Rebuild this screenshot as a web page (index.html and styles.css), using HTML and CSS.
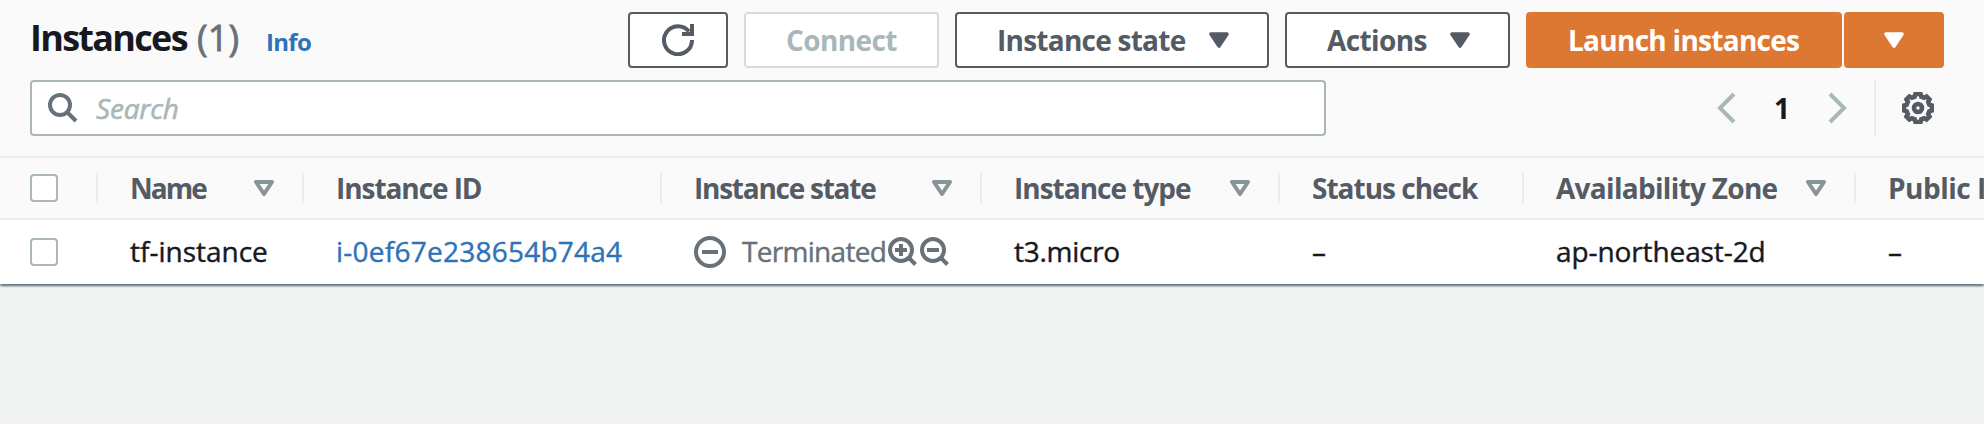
FILE: index.html
```html
<!DOCTYPE html>
<html lang="en">
<head>
<meta charset="utf-8">
<title>Instances</title>
<link rel="stylesheet" href="styles.css">
</head>
<body>
<svg class="defs" aria-hidden="true">
  <symbol id="caret" viewBox="0 0 20 16"><path d="M2 2h16l-8 12z" fill="currentColor" stroke="currentColor" stroke-width="3.6" stroke-linejoin="round"/></symbol>
  <symbol id="sort" viewBox="0 0 20 16"><path d="M2 2h16l-8 12z" fill="none" stroke="currentColor" stroke-width="4" stroke-linejoin="round"/></symbol>
</svg>
<main class="panel">
  <header class="toolbar">
    <h1 class="title"><span class="name">Instances</span><span class="count">(1)</span></h1>
    <a class="info">Info</a>
    <div class="actions">
      <button class="btn refresh" aria-label="Refresh"><svg width="32" height="32" viewBox="0 0 32 32" fill="none" stroke="currentColor" stroke-width="4"><path d="M30 16A14 14 0 1 1 27 7.5"/><path d="M20 10h10V0"/></svg></button>
      <button class="btn connect" disabled><span>Connect</span></button>
      <button class="btn state"><span>Instance state</span><svg class="caret"><use href="#caret"/></svg></button>
      <button class="btn act"><span>Actions</span><svg class="caret"><use href="#caret"/></svg></button>
      <div class="split">
        <button class="btn primary launch"><span>Launch instances</span></button>
        <button class="btn primary more" aria-label="More"><svg class="caret"><use href="#caret"/></svg></button>
      </div>
    </div>
  </header>
  <div class="filter">
    <div class="search">
      <svg width="30" height="30" viewBox="0 0 30 30" fill="none" stroke="currentColor" stroke-width="4"><circle cx="12" cy="12" r="10"/><path d="M19 19l9 9"/></svg>
      <span class="placeholder">Search</span>
    </div>
    <nav class="pages">
      <svg width="19" height="32" viewBox="0 0 19 32" fill="none" stroke="currentColor" stroke-width="4"><path d="M17 2L3 16l14 14"/></svg>
      <span class="page">1</span>
      <svg width="19" height="32" viewBox="0 0 19 32" fill="none" stroke="currentColor" stroke-width="4"><path d="M2 2l14 14L2 30"/></svg>
    </nav>
    <div class="settings">
      <svg width="32" height="32" viewBox="0 0 32 32" fill="none" stroke="currentColor" stroke-width="4.6"><path stroke-linejoin="miter" d="M13.500 2h5l.8 2.700 2.800 1.100 2.500-1.300 2.900 2.900-1.300 2.500 1.100 2.800 2.700.8v5l-2.700.8-1.100 2.800 1.300 2.500-2.900 2.900-2.500-1.300-2.800 1.100-.8 2.700h-5l-.8-2.700-2.800-1.100-2.500 1.300-2.900-2.900 1.300-2.500-1.100-2.800L2 18.500v-5l2.700-.8 1.100-2.800-1.300-2.500 2.900-2.900 2.500 1.300 2.800-1.100z"/><circle cx="16" cy="16" r="4"/></svg>
    </div>
  </div>
  <div class="row head">
    <div class="cell pick"><i class="box"></i></div>
    <div class="cell"><span class="col-name">Name</span><svg class="sort"><use href="#sort"/></svg></div>
    <div class="cell"><span class="col-id">Instance ID</span></div>
    <div class="cell"><span class="col-state">Instance state</span><svg class="sort"><use href="#sort"/></svg></div>
    <div class="cell"><span class="col-type">Instance type</span><svg class="sort"><use href="#sort"/></svg></div>
    <div class="cell"><span class="col-check">Status check</span></div>
    <div class="cell"><span class="col-zone">Availability Zone</span><svg class="sort"><use href="#sort"/></svg></div>
    <div class="cell"><span class="col-public">Public I</span></div>
  </div>
  <div class="row body">
    <div class="cell pick"><i class="box"></i></div>
    <div class="cell"><span>tf-instance</span></div>
    <div class="cell"><a class="val-id">i-0ef67e238654b74a4</a></div>
    <div class="cell status">
      <svg width="32" height="32" viewBox="0 0 32 32" fill="none" stroke="currentColor" stroke-width="4"><circle cx="16" cy="16" r="14"/><path d="M8 16h16"/></svg>
      <span class="val-state">Terminated</span>
      <svg class="zoom" width="30" height="30" viewBox="0 0 30 30" fill="none" stroke="currentColor" stroke-width="4"><circle cx="13" cy="13" r="11"/><path d="M20.500 20.500l7 7M7 13h12M13 7v12"/></svg>
      <svg class="zoom" width="30" height="30" viewBox="0 0 30 30" fill="none" stroke="currentColor" stroke-width="4"><circle cx="13" cy="13" r="11"/><path d="M20.500 20.500l7 7M7 13h12"/></svg>
    </div>
    <div class="cell"><span class="val-type">t3.micro</span></div>
    <div class="cell"><span>–</span></div>
    <div class="cell"><span class="val-zone">ap-northeast-2d</span></div>
    <div class="cell"><span>–</span></div>
  </div>
</main>
</body>
</html>
```
FILE: styles.css
```css
* { box-sizing: border-box; }
body { margin: 0; height: 424px; overflow: hidden; background: #f2f3f3; color: #16191f; font: 28px/40px "Open Sans", "Noto Sans", sans-serif; white-space: nowrap; }
svg { display: block; flex: none; }
.defs { display: none; }
.panel { height: 284px; background: #fafafa; box-shadow: 0 2px 2px rgba(0, 28, 36, .35), 2px 2px 2px rgba(0, 28, 36, .2), -2px 2px 2px rgba(0, 28, 36, .2); }
.toolbar { display: flex; height: 80px; padding: 12px 40px 0 30px; }
.title { display: flex; gap: 10px; margin: 0; width: 236px; font-size: 36px; line-height: 52px; }
.title .name { letter-spacing: -1.7px; }
.count { font-weight: 400; color: #687078; letter-spacing: .2px; -webkit-text-stroke: .8px; }
.info { font-size: 24px; font-weight: 700; line-height: 60px; color: #2e73b8; letter-spacing: -.7px; }
.actions { display: flex; gap: 16px; margin-left: auto; }
.btn { display: flex; align-items: center; height: 56px; padding: 0 0 0 40px; border: 2px solid #545b64; border-radius: 4px; background: #fff; color: #545b64; font: 700 28px/52px "Open Sans", "Noto Sans", sans-serif; letter-spacing: -.6px; white-space: nowrap; }
.refresh { width: 100px; padding: 0; justify-content: center; }
.connect { width: 195px; border-color: #d5dbdb; color: #aab7b8; }
.state { width: 314px; letter-spacing: -.75px; }
.act { width: 225px; }
.state .caret, .act .caret { margin-left: auto; margin-right: 38px; }
.caret, .sort { width: 20px; height: 16px; }
.split { display: flex; gap: 2px; }
.primary { border-color: #dd7833; background: #dd7833; color: #fff; }
.launch { width: 316px; letter-spacing: -.72px; }
.more { width: 100px; padding: 0; justify-content: center; }
.filter { display: flex; height: 76px; padding: 0 50px 20px 30px; }
.search { display: flex; align-items: center; width: 1296px; height: 56px; padding-left: 16px; border: 2px solid #aab7b8; border-radius: 4px; background: #fff; color: #687078; }
.placeholder { margin-left: 18px; font-style: italic; color: #aab7b8; letter-spacing: -.2px; -webkit-text-stroke: .6px; }
.pages { display: flex; align-items: center; justify-content: space-between; width: 130px; height: 56px; margin: 0 27px 0 auto; color: #aab7b8; }
.page { font-weight: 700; line-height: 56px; color: #16191f; }
.settings { display: flex; align-items: center; width: 60px; height: 56px; padding-left: 26px; border-left: 2px solid #eaeded; color: #545b64; }
.row { display: grid; grid-template-columns: 98px 206px 358px 320px 298px 244px 332px 128px; align-items: center; overflow: hidden; }
.head { height: 64px; border-top: 2px solid #eaeded; border-bottom: 2px solid #eaeded; color: #545b64; font-weight: 700; }
.body { height: 64px; background: #fff; }
.cell { display: flex; align-items: center; height: 30px; padding-left: 32px; }
.head .cell { border-right: 2px solid #eaeded; }
.head .cell:last-child { border: 0; }
.body .cell span, .body .cell a { padding-bottom: 2px; -webkit-text-stroke: .4px; }
.row .pick { padding-left: 30px; }
.box { width: 28px; height: 28px; border: 2px solid #aab7b8; border-radius: 4px; background: #fff; }
.sort { margin-left: auto; margin-right: 28px; color: #879596; }
.cell a { color: #2e73b8; }
.cell.status { color: #687078; }
.col-name { letter-spacing: -2px; }
.col-id { letter-spacing: -1.07px; }
.col-state { letter-spacing: -1.25px; }
.col-type { letter-spacing: -1px; }
.col-check { letter-spacing: -1px; }
.col-zone { letter-spacing: -.7px; }
.col-public { letter-spacing: -.5px; }
.val-id { letter-spacing: .24px; }
.val-state { width: 146px; margin-left: 16px; letter-spacing: -.7px; }
.val-type { letter-spacing: -.27px; }
.val-zone { letter-spacing: -.1px; }
.zoom { margin-right: 2px; }
```
